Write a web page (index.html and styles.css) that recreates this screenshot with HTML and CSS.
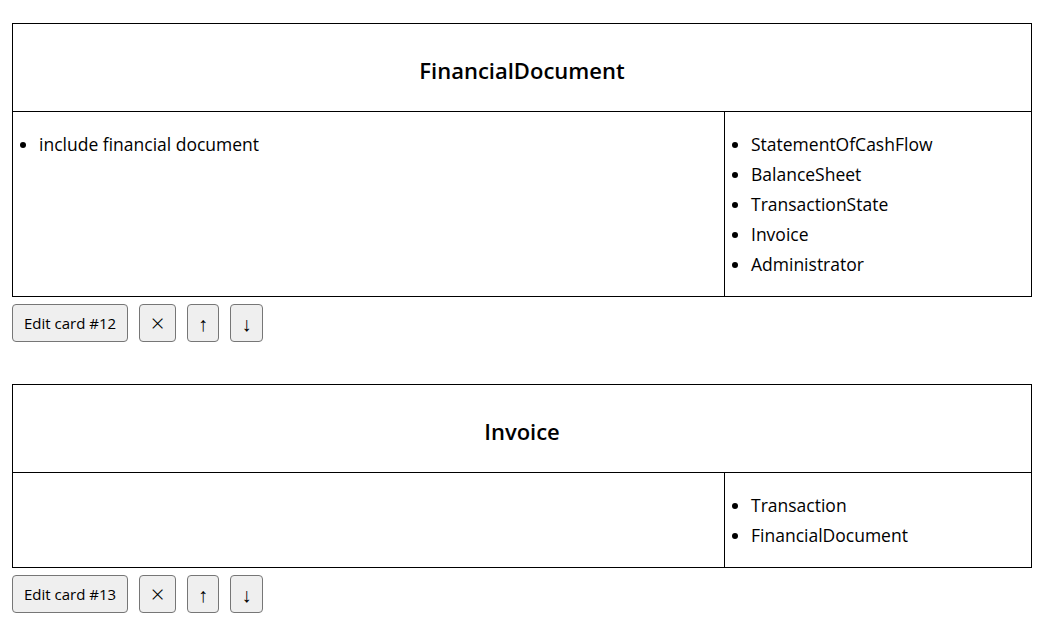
FILE: index.html
```html
<!DOCTYPE html>
<html>
<head>
<meta charset="utf-8">
<link rel="stylesheet" href="styles.css">
</head>
<body>
<div class="page">
  <section class="block">
    <div class="card">
      <div class="card-title">FinancialDocument</div>
      <div class="card-body">
        <div class="cell cell-main">
          <ul class="list">
            <li>include financial document</li>
          </ul>
        </div>
        <div class="cell cell-side">
          <ul class="list">
            <li>StatementOfCashFlow</li>
            <li>BalanceSheet</li>
            <li>TransactionState</li>
            <li>Invoice</li>
            <li>Administrator</li>
          </ul>
        </div>
      </div>
    </div>
    <div class="actions">
      <button class="btn btn-edit">Edit card #12</button>
      <button class="btn btn-x">×</button>
      <button class="btn btn-up">↑</button>
      <button class="btn btn-down">↓</button>
    </div>
  </section>
  <section class="block">
    <div class="card">
      <div class="card-title">Invoice</div>
      <div class="card-body">
        <div class="cell cell-main"></div>
        <div class="cell cell-side">
          <ul class="list">
            <li>Transaction</li>
            <li>FinancialDocument</li>
          </ul>
        </div>
      </div>
    </div>
    <div class="actions">
      <button class="btn btn-edit">Edit card #13</button>
      <button class="btn btn-x">×</button>
      <button class="btn btn-up">↑</button>
      <button class="btn btn-down">↓</button>
    </div>
  </section>
</div>
</body>
</html>
```
FILE: styles.css
```css
html, body {
  margin: 0;
  padding: 0;
  background: #fff;
}
body {
  font-family: "Open Sans", "Liberation Sans", sans-serif;
  color: #000;
}
.page {
  width: 1020px;
  padding: 23px 0 0 12px;
  display: flex;
  flex-direction: column;
  gap: 42px;
}
.card {
  border: 1px solid #000;
}
.card-title {
  box-sizing: border-box;
  height: 88px;
  padding-top: 5px;
  display: flex;
  align-items: center;
  justify-content: center;
  font-size: 22px;
  font-weight: 600;
  border-bottom: 1px solid #000;
}
.card-body {
  display: grid;
  grid-template-columns: 711px 1fr;
}
.cell {
  padding: 17px 0 17px 0;
}
.cell-side {
  border-left: 1px solid #000;
}
.list {
  margin: 0;
  padding-left: 26px;
  font-size: 17.5px;
  line-height: 30px;
}
.actions {
  display: flex;
  gap: 11px;
  margin-top: 7px;
}
.btn {
  font-family: "Open Sans", "Liberation Sans", sans-serif;
  font-size: 15px;
  height: 38px;
  padding: 0;
  white-space: nowrap;
  background: #efefef;
  border: 1px solid #767676;
  border-radius: 4px;
  color: #000;
}
.btn-edit { width: 116px; }
.btn-x { width: 37px; font-size: 24px; font-weight: 300; line-height: 1; }
.btn-up { width: 32px; font-size: 20px; }
.btn-down { width: 33px; font-size: 20px; }
```
